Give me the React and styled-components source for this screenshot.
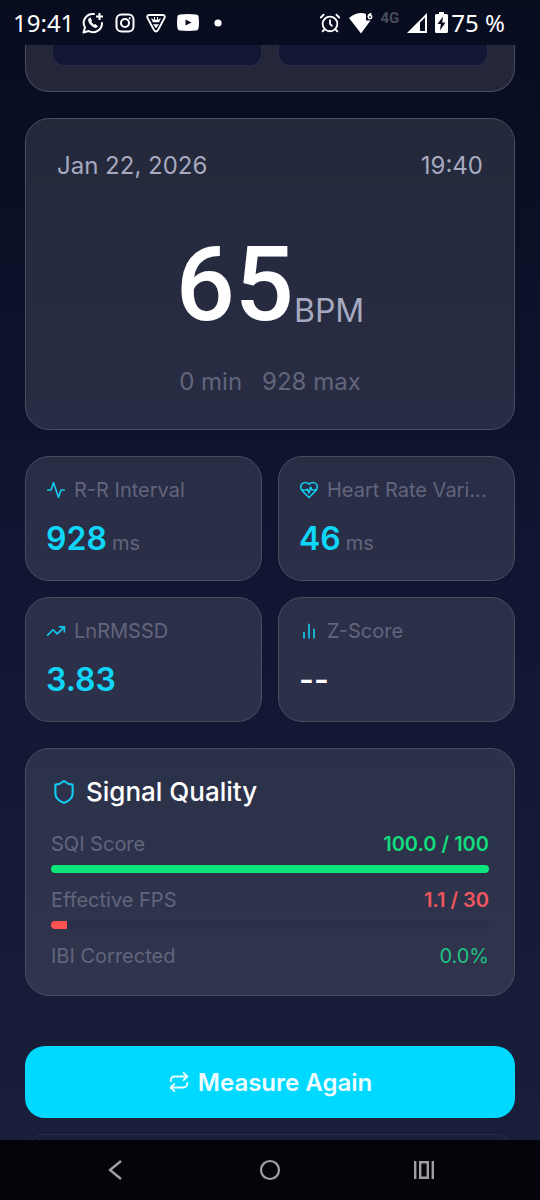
import styled, { createGlobalStyle } from "styled-components";
import { AlarmClock, Repeat, Shield, TrendingUp } from "lucide-react";


const GlobalStyle = createGlobalStyle`
  * { box-sizing: border-box; }

  body {
    margin: 0;
    background: #05060b;
    font-family: Inter, "Liberation Sans", sans-serif;
  }

  h2, p, dl, dd, dt { margin: 0; font-weight: 400; }
`;

const Screen = styled.div`
  display: flex;
  flex-flow: column nowrap;
  height: 100vh;
  overflow: hidden;
  background: linear-gradient(180deg, #080c1f 0%, #101531 45%, #1a1f3b 100%);
`;

const StatusBar = styled.header`
  display: flex;
  flex: 0 0 45px;
  align-items: center;
  justify-content: space-between;
  padding: 0 35px 0 13px;
  color: #fff;
  font-family: "Noto Sans", sans-serif;
  font-size: 24px;
  line-height: 32px;
`;

const StatusGroup = styled.div`
  display: flex;
  align-items: center;
  gap: ${ ({$gap}) => $gap }px;

  & svg { display: block; }
`;

const NetworkType = styled.span`
  align-self: flex-start;
  color: #4a4d5b;
  font-family: Roboto, sans-serif;
  font-size: 15px;
  font-weight: 700;
  line-height: 22px;
`;

const Content = styled.main`
  display: flex;
  flex: 1 1 0;
  flex-flow: column nowrap;
  gap: 26px;
  min-height: 0;
  overflow: hidden;
  padding: 0 25px;

  & > * { flex-shrink: 0; }
`;

const Card = styled.section`
  border: 1px solid #4a4d5e;
  border-radius: 24px;
  background: rgba(255, 255, 255, 0.11);
`;

const TileCard = styled(Card)`
  display: grid;
  grid-template-columns: 1fr 1fr;
  gap: 16px;
  border-top: 0;
  border-radius: 0 0 24px 24px;
  padding: 0 26px 25px;
`;

const Tile = styled.div`
  height: 21px;
  border: 1px solid #272b46;
  border-top: 0;
  border-radius: 0 0 12px 12px;
  background: #131733;
`;

const PulseCard = styled(Card)`
  display: flex;
  flex-flow: column nowrap;
  gap: 20px;
  padding: 31px;
`;

const PulseRow = styled.div`
  display: flex;
  justify-content: ${ ({$center}) => $center ? "center" : "space-between" };
  gap: 20px;
  color: ${ ({$center}) => $center ? "#62657c" : "#a6a9bf" };
  font-size: 24px;
  line-height: 32px;
`;

const PulseValue = styled.p`
  display: flex;
  align-items: flex-end;
  justify-content: center;
  padding-top: 22px;
  color: #fff;
  font-family: Roboto, sans-serif;
  font-size: 104px;
  font-weight: 500;
  line-height: 122px;
`;

const PulseUnit = styled.span`
  color: #a6a9bf;
  font-family: Inter, sans-serif;
  font-size: 32px;
  font-weight: 400;
  line-height: 70px;
`;

const MetricGrid = styled.div`
  display: grid;
  grid-template-columns: 1fr 1fr;
  gap: 16px;
`;

const MetricCard = styled(Card)`
  display: flex;
  flex-flow: column nowrap;
  gap: 16px;
  min-width: 0;
  padding: 20px 20px 21px;
`;

const MetricLabel = styled.div`
  display: flex;
  align-items: center;
  gap: 8px;
  color: #62657c;
  font-size: 20px;
  line-height: 26px;

  & svg { flex: 0 0 20px; color: #12c9ec; }

  & span {
    overflow: hidden;
    text-overflow: ellipsis;
    white-space: nowrap;
  }
`;

const MetricValue = styled.p`
  color: ${ ({$empty}) => $empty ? "#fff" : "#0fd6f8" };
  font-size: 32px;
  font-weight: 600;
  line-height: 40px;

  & small {
    margin-left: 5px;
    color: #62657c;
    font-size: 20px;
    font-weight: 400;
    line-height: 20px;
  }
`;

const QualityCard = styled(Card)`
  padding: 25px;
`;

const QualityTitle = styled.h2`
  display: flex;
  align-items: center;
  gap: 9px;
  margin-bottom: 20px;
  color: #fff;
  font-size: 26px;
  font-weight: 500;
  line-height: 36px;

  & svg { color: #12c9ec; }
`;

const QualityRow = styled.div`
  display: flex;
  justify-content: space-between;
  font-size: 20px;
  line-height: 28px;

  & dt { color: #62657c; }

  & dd {
    color: ${ ({$color}) => $color };
    font-weight: ${ ({$strong}) => $strong ? 600 : 400 };
  }
`;

const Track = styled.div`
  height: 8px;
  margin: 7px 0 13px;
  overflow: hidden;
  border-radius: 4px;
  background: #2b2f4a;
`;

const Fill = styled.div`
  height: 100%;
  background: ${ ({$color}) => $color };
`;

const Actions = styled.div`
  display: flex;
  flex-flow: column nowrap;
  gap: 16px;
  padding-top: 24px;
`;

const PrimaryButton = styled.button`
  display: flex;
  align-items: center;
  justify-content: center;
  gap: 8px;
  width: 100%;
  height: 72px;
  border: 0;
  border-radius: 20px;
  background: #00d9ff;
  color: #effcff;
  font-family: inherit;
  font-size: 24px;
  font-weight: 600;
  cursor: pointer;
`;

const NextPanel = styled.div`
  height: 72px;
  border: 1px solid #292e4b;
  border-radius: 20px;
`;

const NavBar = styled.nav`
  display: flex;
  flex: 0 0 60px;
  align-items: center;
  justify-content: space-between;
  padding: 0 96px;
  background: #04050a;
`;

const NavButton = styled.button`
  display: flex;
  align-items: center;
  justify-content: center;
  width: 40px;
  height: 40px;
  border: 0;
  padding: 0;
  background: none;
  color: #a0a0a4;
`;

const WhatsAppIcon = () => (
  <svg width="22" height="22" viewBox="0 0 22 22" fill="none" stroke="currentColor" strokeWidth="2">
    <path d="M12 2A9 9 0 0 0 3 15.500L1.500 20.500L6.500 19A9 9 0 0 0 20 11" strokeLinejoin="round" strokeLinecap="round" />
    <path d="M7 6.500C6 8 7 11 9.500 13.300S14.500 16 15.500 14.500L13.500 12.500L12 13.300L8.800 10L9.500 8.500L8.300 6Z" fill="currentColor" strokeWidth="1" />
    <path d="M17.500 1V8M14 4.500H21" />
  </svg>
);

const InstagramIcon = () => (
  <svg width="20" height="20" viewBox="0 0 20 20" fill="none" stroke="currentColor" strokeWidth="2">
    <rect x="1.500" y="1.500" width="17" height="17" rx="5" />
    <circle cx="10" cy="10" r="4" />
    <circle cx="14.700" cy="5.300" r="1.100" fill="currentColor" stroke="none" />
  </svg>
);

const ShieldLogoIcon = () => (
  <svg width="20" height="20" viewBox="0 0 20 20" fill="none" stroke="currentColor" strokeWidth="1.800" strokeLinejoin="round">
    <path d="M3 2H17Q19.500 2.300 18.500 5L12 17Q10 20 8 17L1.500 5Q0.500 2.300 3 2Z" />
    <path d="M5.500 5.500L8 7H12L14.500 5.500L13 9H7ZM7.500 11.500H12.500L10 15Z" fill="currentColor" strokeWidth="0.500" />
    <path d="M8.500 4V7M11.500 4V7" strokeWidth="1" />
  </svg>
);

const YouTubeIcon = () => (
  <svg width="22" height="17" viewBox="0 0 22 17">
    <path d="M3 0.500Q11 -0.300 19 0.500Q21.500 0.700 21.700 3.500Q22.200 8.500 21.700 13.500Q21.500 16.300 19 16.500Q11 17.300 3 16.500Q0.500 16.300 0.300 13.500Q-0.200 8.500 0.300 3.500Q0.500 0.700 3 0.500Z" fill="currentColor" />
    <path d="M8.500 5.500L14.500 8.500L8.500 11.500Z" fill="#090d20" />
  </svg>
);

const DotIcon = () => (
  <svg width="12" height="8" viewBox="0 0 12 8"><circle cx="8" cy="4" r="3.600" fill="currentColor" /></svg>
);

const WifiIcon = () => (
  <svg width="24" height="22" viewBox="0 0 24 22">
    <path d="M0 6Q6 1 12 1Q15 1 17 2V8.500H21.500L12 21.500Z" fill="currentColor" />
    <path d="M22.500 1.800Q19.300 1.800 19.300 5" fill="none" stroke="currentColor" strokeWidth="1.500" />
    <circle cx="21" cy="5" r="1.700" fill="none" stroke="currentColor" strokeWidth="1.500" />
  </svg>
);

const SignalIcon = () => (
  <svg width="20" height="20" viewBox="0 0 20 20">
    <path d="M0 20L20 0V20ZM13 9.500V18H18V4.500Z" fill="currentColor" fillRule="evenodd" />
  </svg>
);

const BatteryIcon = () => (
  <svg width="13" height="21" viewBox="0 0 13 21">
    <path d="M4 0H9V2H11.500Q13 2 13 3.500V19.500Q13 21 11.500 21H1.500Q0 21 0 19.500V3.500Q0 2 1.500 2H4Z" fill="currentColor" />
    <path d="M8 4.500L2.500 12H5.800L5 18.500L10.500 10.500H7.200Z" fill="#090d20" />
  </svg>
);

const MetricIcon = ({ children }) => (
  <svg width="20" height="20" viewBox="0 0 24 24" fill="none" stroke="currentColor"
    strokeWidth="2" strokeLinecap="round" strokeLinejoin="round">
    { children }
  </svg>
);

const ActivityIcon = () => (
  <MetricIcon>
    <path d="M22 12H18L15 21L9 3L6 12H2" />
  </MetricIcon>
);

const HeartIcon = () => (
  <MetricIcon>
    <path d="M19 14c1.490-1.460 3-3.210 3-5.500A5.500 5.500 0 0 0 16.500 3c-1.760 0-3 .5-4.500 2-1.500-1.500-2.740-2-4.500-2A5.500 5.500 0 0 0 2 8.500c0 2.300 1.500 4.050 3 5.500l7 7Z" />
    <path d="M3.220 12H9.500l.5-1 2 4.500 2-7 1.500 3.500h5.270" />
  </MetricIcon>
);

const BarsIcon = () => (
  <MetricIcon>
    <path d="M6 20V14M12 20V4M18 20V10" />
  </MetricIcon>
);

const metrics = [
  { label: "R-R Interval", value: "928", unit: "ms", icon: <ActivityIcon /> },
  { label: "Heart Rate Variability", value: "46", unit: "ms", icon: <HeartIcon /> },
  { label: "LnRMSSD", value: "3.83", icon: <TrendingUp size={ 20 } /> },
  { label: "Z-Score", value: "--", icon: <BarsIcon /> },
];

const signals = [
  { label: "SQI Score", value: "100.0 / 100", color: "#12dd7c", bar: "#0ce57b", percent: 100 },
  { label: "Effective FPS", value: "1.1 / 30", color: "#f0565d", bar: "#ff5252", percent: 1.1 / 30 * 100 },
  { label: "IBI Corrected", value: "0.0%", color: "#20c283" },
];

const Metric = ({ label, value, unit, icon }) => (
  <MetricCard>
    <MetricLabel>{ icon }<span>{ label }</span></MetricLabel>
    <MetricValue $empty={ value === "--" }>
      { value }{ unit && <small>{ unit }</small> }
    </MetricValue>
  </MetricCard>
);

const Signal = ({ label, value, color, bar, percent }) => (
  <>
    <QualityRow $color={ color } $strong={ percent !== undefined }>
      <dt>{ label }</dt>
      <dd>{ value }</dd>
    </QualityRow>
    { percent !== undefined && (
      <Track><Fill $color={ bar } style={{ width: `${ percent }%` }} /></Track>
    ) }
  </>
);

const App = () => (
  <>
    <GlobalStyle />
    <Screen>
      <StatusBar>
        <StatusGroup $gap={ 11 }>
          <StatusGroup $gap={ 8 }>
            <span>19:41</span>
            <WhatsAppIcon />
          </StatusGroup>
          <InstagramIcon />
          <ShieldLogoIcon />
          <YouTubeIcon />
          <DotIcon />
        </StatusGroup>
        <StatusGroup $gap={ 8 }>
          <AlarmClock size={ 22 } />
          <WifiIcon />
          <NetworkType>4G</NetworkType>
          <SignalIcon />
          <StatusGroup $gap={ 3 }>
            <BatteryIcon />
            <span>75 %</span>
          </StatusGroup>
        </StatusGroup>
      </StatusBar>

      <Content>
        <TileCard>
          <Tile />
          <Tile />
        </TileCard>

        <PulseCard>
          <PulseRow>
            <time>Jan 22, 2026</time>
            <time>19:40</time>
          </PulseRow>
          <PulseValue>65<PulseUnit>BPM</PulseUnit></PulseValue>
          <PulseRow $center>
            <span>0 min</span>
            <span>928 max</span>
          </PulseRow>
        </PulseCard>

        <MetricGrid>
          { metrics.map( (metric) => <Metric key={ metric.label } { ...metric } /> ) }
        </MetricGrid>

        <QualityCard>
          <QualityTitle><Shield size={ 26 } />Signal Quality</QualityTitle>
          <dl>
            { signals.map( (signal) => <Signal key={ signal.label } { ...signal } /> ) }
          </dl>
        </QualityCard>

        <Actions>
          <PrimaryButton type="button"><Repeat size={ 22 } />Measure Again</PrimaryButton>
          <NextPanel />
        </Actions>
      </Content>

      <NavBar>
        <NavButton type="button" aria-label="Back">
          <svg width="20" height="20" viewBox="0 0 20 20" fill="none" stroke="currentColor" strokeWidth="2.400">
            <path d="M15 1L4 10L15 19" />
          </svg>
        </NavButton>
        <NavButton type="button" aria-label="Home">
          <svg width="22" height="22" viewBox="0 0 22 22" fill="none" stroke="currentColor" strokeWidth="2.200">
            <circle cx="11" cy="11" r="9" />
          </svg>
        </NavButton>
        <NavButton type="button" aria-label="Recent apps">
          <svg width="20" height="18" viewBox="0 0 20 18" fill="none" stroke="currentColor" strokeWidth="2.400">
            <path d="M1.200 0V18M18.800 0V18M6.200 1.200H13.800V16.800H6.200Z" />
          </svg>
        </NavButton>
      </NavBar>
    </Screen>
  </>
);

export default App;
